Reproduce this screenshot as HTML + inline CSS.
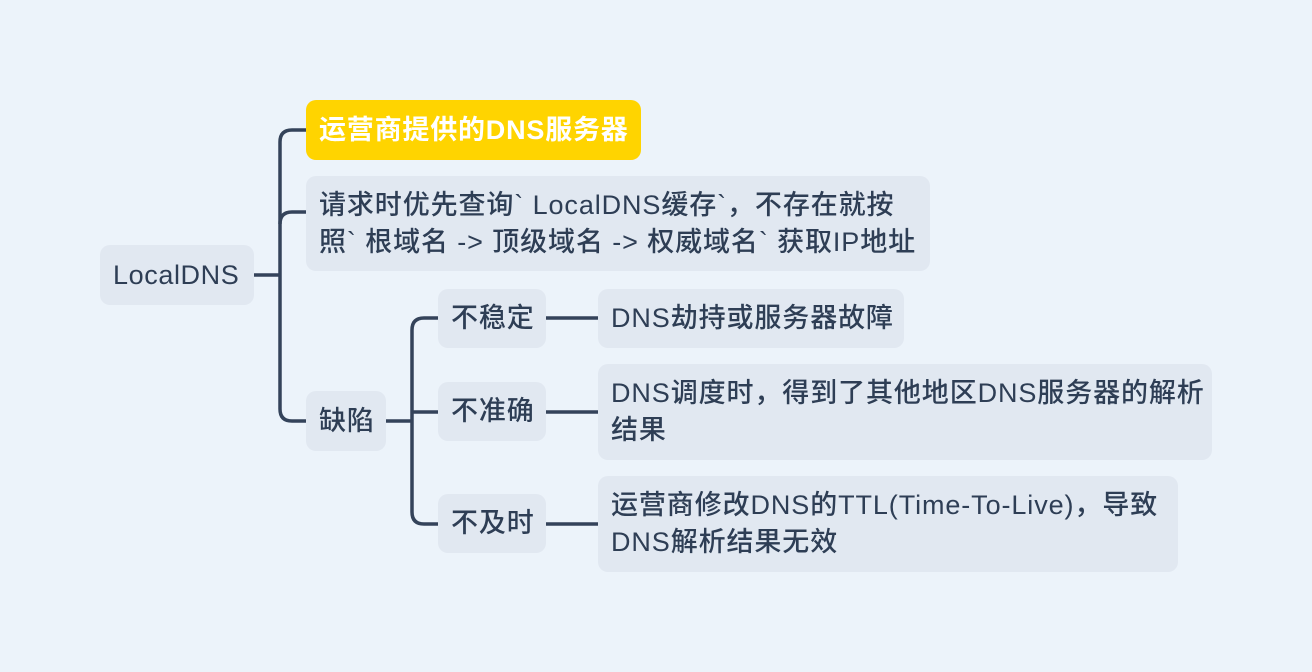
<!DOCTYPE html>
<html><head><meta charset="utf-8"><style>
html,body{margin:0;padding:0}
body{width:1312px;height:672px;background:#ECF3FA;position:relative;overflow:hidden;font-family:"Liberation Sans","Noto Sans CJK SC",sans-serif;color:#2E3E55}
.n{position:absolute;background:#E1E8F1;border-radius:10px;font-size:27px;letter-spacing:0.9px;line-height:37px;box-sizing:border-box;padding:0 13px;display:flex;align-items:center;font-weight:500;white-space:nowrap}
svg{position:absolute;left:0;top:0}
</style></head><body>
<svg width="1312" height="672"><g fill="none" stroke="#34435A" stroke-width="3.5">
<path d="M254 275H280"/>
<path d="M306 130H292Q280 130 280 142V409Q280 421 292 421H306"/>
<path d="M280 224Q280 212 292 212H306"/>
<path d="M386 421H412"/>
<path d="M438 318H424Q412 318 412 330V512Q412 524 424 524H438"/>
<path d="M412 412H438"/>
<path d="M546 318H598M546 412H598M546 524H598"/>
</g></svg>
<div class="n" style="left:100px;top:245px;width:154px;height:60px;letter-spacing:0.6px">LocalDNS</div>
<div class="n" style="left:306px;top:100px;width:335px;height:60px;background:#FFD400;color:#fff;font-weight:bold;letter-spacing:0.8px">运营商提供的DNS服务器</div>
<div class="n" style="left:306px;top:176px;width:624px;height:95px;">请求时优先查询` LocalDNS缓存`，不存在就按<br>照` 根域名 -&gt; 顶级域名 -&gt; 权威域名` 获取IP地址</div>
<div class="n" style="left:306px;top:391px;width:80px;height:60px;">缺陷</div>
<div class="n" style="left:438px;top:289px;width:108px;height:59px;">不稳定</div>
<div class="n" style="left:438px;top:382px;width:108px;height:59px;">不准确</div>
<div class="n" style="left:438px;top:494px;width:108px;height:59px;">不及时</div>
<div class="n" style="left:598px;top:289px;width:306px;height:59px;">DNS劫持或服务器故障</div>
<div class="n" style="left:598px;top:364px;width:614px;height:96px;">DNS调度时，得到了其他地区DNS服务器的解析<br>结果</div>
<div class="n" style="left:598px;top:476px;width:580px;height:96px;">运营商修改DNS的TTL(Time-To-Live)，导致<br>DNS解析结果无效</div>
</body></html>
